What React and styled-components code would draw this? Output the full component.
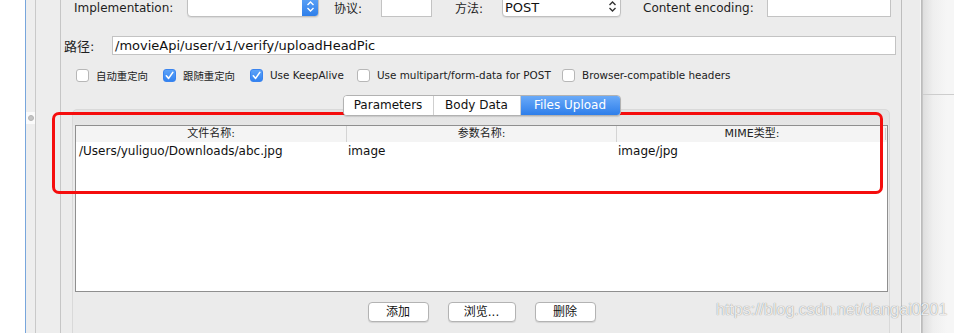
import React from "react";
import styled, { createGlobalStyle } from "styled-components";

const Global = createGlobalStyle`
  html, body { margin: 0; padding: 0; background: #fff; overflow: hidden; }
  #root { width: 954px; height: 333px; }
`;

const FONT = `"DejaVu Sans", "Noto Sans CJK SC", sans-serif`;

const Page = styled.div`
  position: relative;
  width: 954px;
  height: 333px;
  display: flex;
  font-family: ${FONT};
  color: #1d1d1d;
  overflow: hidden;
`;

const LeftGutter = styled.div`
  width: 25px;
  background: #ffffff;
`;

const Splitter = styled.div`
  width: 11px;
  box-sizing: border-box;
  border-left: 1px solid #78a6dc;
  border-right: 1px solid #c9c9c9;
  background: #eeeeee;
  display: flex;
  flex-direction: column;
  align-items: center;
  padding-top: 112px;
`;

const HandleBox = styled.div`
  width: 9px;
  height: 12px;
  background: #fbfbfb;
  display: flex;
  align-items: center;
  justify-content: center;
`;

const HandleDot = styled.div`
  width: 6px;
  height: 6px;
  border-radius: 50%;
  background: #c4c4c4;
  border: 1px solid #b4b4b4;
  box-sizing: border-box;
`;

const SideStrip = styled.div`
  width: ${(p) => p.$w}px;
  box-sizing: border-box;
  background: #ededed;
  border-right: 1px solid ${(p) => p.$line};
`;

const Main = styled.div`
  width: 841px;
  box-sizing: border-box;
  background: #ececec;
  border-right: 1px solid #bdbdbd;
  display: flex;
  flex-direction: column;
`;

const Row = styled.div`
  display: flex;
  align-items: center;
  height: ${(p) => p.$h}px;
  margin-top: ${(p) => p.$mt}px;
  padding-left: ${(p) => p.$pl}px;
`;

const Label = styled.span`
  width: ${(p) => p.$w}px;
  margin-left: ${(p) => p.$ml || 0}px;
  padding-top: ${(p) => p.$pt || 0}px;
  flex-shrink: 0;
  font-size: ${(p) => p.$fs || 12}px;
  color: #1e1e1e;
  white-space: nowrap;
`;

const TextBox = styled.div`
  width: ${(p) => p.$w}px;
  height: ${(p) => p.$h}px;
  box-sizing: border-box;
  background: #fff;
  border: 1px solid #c3c3c3;
  font-size: 13px;
  line-height: ${(p) => p.$h - 2}px;
  padding-left: 2px;
  color: #111;
  white-space: nowrap;
  overflow: hidden;
`;

const SelectBox = styled.div`
  position: relative;
  width: ${(p) => p.$w}px;
  height: 21px;
  box-sizing: border-box;
  background: #fff;
  border: 1px solid #c0c0c0;
  border-radius: 4px;
  display: flex;
  align-items: center;
  font-size: 13px;
  padding-left: 2px;
  padding-top: 2px;
  color: #111;
  box-shadow: 0 1px 1px rgba(0, 0, 0, 0.08);
`;

const Stepper = styled.div`
  margin-left: auto;
  margin-top: -2px;
  width: 16px;
  height: 19px;
  border-radius: 0 3px 3px 0;
  background: ${(p) => (p.$blue ? "linear-gradient(#5ea4f7, #2f7fea)" : "transparent")};
  display: flex;
  align-items: center;
  justify-content: center;
`;

const CheckRow = styled.div`
  display: flex;
  align-items: center;
  width: ${(p) => p.$w}px;
  flex-shrink: 0;
`;

const Box = styled.div`
  width: 13px;
  height: 13px;
  flex-shrink: 0;
  box-sizing: border-box;
  border-radius: 3px;
  border: 1px solid ${(p) => (p.$on ? "#3a84ef" : "#b7b7b7")};
  background: ${(p) => (p.$on ? "linear-gradient(#5da3f8, #3282f0)" : "#fff")};
  display: flex;
  align-items: center;
  justify-content: center;
  margin-right: 7px;
`;

const CheckText = styled.span`
  font-size: 10.4px;
  color: #222;
  white-space: nowrap;
`;

const TabArea = styled.div`
  margin-top: 13px;
  margin-left: 11px;
  width: 818px;
  display: flex;
  flex-direction: column;
  align-items: center;
`;

const TabBar = styled.div`
  position: relative;
  z-index: 1;
  display: flex;
  height: 19px;
  margin-bottom: -7px;
  margin-left: 1px;
  border: 1px solid #b2b2b2;
  border-radius: 4px;
  background: #fff;
  box-shadow: 0 1px 1px rgba(0, 0, 0, 0.12);
  overflow: hidden;
`;

const Tab = styled.div`
  width: ${(p) => p.$w}px;
  font-size: 12px;
  line-height: 19px;
  text-align: center;
  color: ${(p) => (p.$active ? "#fff" : "#111")};
  background: ${(p) => (p.$active ? "linear-gradient(#6aaaf8, #2e7eea)" : "#fff")};
  border-left: ${(p) => (p.$first ? "none" : "1px solid #cfcfcf")};
`;

const Panel = styled.div`
  width: 818px;
  height: 232px;
  box-sizing: border-box;
  border: 1px solid #d9d9d9;
  border-radius: 5px 5px 0 0;
  background: linear-gradient(#e3e3e3 0px, #e6e6e6 16px, #ebebeb 16px);
  padding: 15px 1px 0 2px;
  display: flex;
  flex-direction: column;
`;

const Table = styled.div`
  height: 167px;
  box-sizing: border-box;
  border: 1px solid #8f8f8f;
  background: #fff;
  display: flex;
  flex-direction: column;
`;

const Cols = styled.div`
  position: relative;
  display: grid;
  grid-template-columns: 270px 270px 1fr;
  height: ${(p) => p.$h}px;
  background: ${(p) => p.$bg};
`;

const HeadCell = styled.div`
  font-size: 11px;
  line-height: 16px;
  text-align: center;
  color: #222;
  border-left: ${(p) => (p.$first ? "none" : "1px solid #d4d4d4")};
`;

const Cell = styled.div`
  font-size: 12px;
  line-height: 18px;
  padding-left: ${(p) => p.$pl}px;
  color: #111;
  white-space: nowrap;
`;

const ScrollMark = styled.div`
  position: absolute;
  right: 1px;
  top: 2px;
  width: 1px;
  height: 12px;
  background: #cfcfcf;
`;

const Buttons = styled.div`
  display: flex;
  justify-content: center;
  gap: 19px;
  margin-top: 10px;
`;

const Button = styled.div`
  width: ${(p) => p.$w}px;
  height: 20px;
  box-sizing: border-box;
  border: 1px solid #b3b3b3;
  border-radius: 4px;
  background: #fff;
  box-shadow: 0 1px 1px rgba(0, 0, 0, 0.1);
  font-size: 12px;
  line-height: 18px;
  text-align: center;
  color: #111;
`;

const RightStrip = styled.div`
  width: 20px;
  box-sizing: border-box;
  background: #ececec;
  border-right: 1px solid #bcbcbc;
  box-shadow: inset -1px 0 0 #f6f6f6;
`;

const RightArea = styled.div`
  flex: 1;
  display: flex;
  flex-direction: column;
  border-left: 1px solid #c6c6c6;
  background: linear-gradient(to right, #dedede, #efefef 10px, #f6f6f6 24px);
`;

const RightTop = styled.div`
  height: 94px;
  border-bottom: 1px solid #cdcdcd;
`;

const Annotation = styled.div`
  position: absolute;
  left: 52px;
  top: 112px;
  width: 831px;
  height: 82px;
  box-sizing: border-box;
  border: 3px solid #f50d0d;
  border-radius: 7px;
  pointer-events: none;
`;

const Watermark = styled.div`
  position: absolute;
  left: 716px;
  top: 300px;
  font-family: "Liberation Sans", Arial, sans-serif;
  font-size: 16px;
  line-height: 20px;
  color: rgba(255, 255, 255, 0.85);
  text-shadow: 0 0 1px rgba(0, 0, 0, 0.35), 0 0 1px rgba(0, 0, 0, 0.2);
  white-space: nowrap;
`;

const Chevrons = ({ color }) => (
  <svg width="9" height="13" viewBox="0 0 9 13">
    <path d="M1.5 5 L4.5 2 L7.5 5" fill="none" stroke={color} strokeWidth="1.4" />
    <path d="M1.5 8 L4.5 11 L7.5 8" fill="none" stroke={color} strokeWidth="1.4" />
  </svg>
);

const Check = () => (
  <svg width="11" height="11" viewBox="0 0 11 11">
    <path d="M2.3 5.8 L4.6 8.4 L8.8 2.4" fill="none" stroke="#fff" strokeWidth="1.6" strokeLinecap="round" strokeLinejoin="round" />
  </svg>
);

const Checkbox = ({ on, label, w }) => (
  <CheckRow $w={w}>
    <Box $on={on}>{on && <Check />}</Box>
    <CheckText>{label}</CheckText>
  </CheckRow>
);

export default function App() {
  return (
    <>
      <Global />
      <Page>
        <LeftGutter />
        <Splitter>
          <HandleBox>
            <HandleDot />
          </HandleBox>
        </Splitter>
        <SideStrip $w={25} $line="#c6c6c6" />
        <Main>
          <Row $h={21} $mt={-4} $pl={13}>
            <Label $w={113} $pt={2}>Implementation:</Label>
            <SelectBox $w={132}>
              <Stepper $blue>
                <Chevrons color="#fff" />
              </Stepper>
            </SelectBox>
            <Label $w={47} $ml={15} $pt={2}>协议:</Label>
            <TextBox $w={51} $h={21} />
            <Label $w={47} $ml={23} $pt={2}>方法:</Label>
            <SelectBox $w={119}>
              POST
              <Stepper>
                <Chevrons color="#333" />
              </Stepper>
            </SelectBox>
            <Label $w={124} $ml={22} $pt={2}>Content encoding:</Label>
            <TextBox $w={124} $h={21} />
          </Row>
          <Row $h={19} $mt={19} $pl={3}>
            <Label $w={48} $fs={13}>路径:</Label>
            <TextBox $w={784} $h={19}>/movieApi/user/v1/verify/uploadHeadPic</TextBox>
          </Row>
          <Row $h={14} $mt={13} $pl={15}>
            <Checkbox on={false} label="自动重定向" w={87} />
            <Checkbox on label="跟随重定向" w={87} />
            <Checkbox on label="Use KeepAlive" w={107} />
            <Checkbox on={false} label="Use multipart/form-data for POST" w={205} />
            <Checkbox on={false} label="Browser-compatible headers" w={200} />
          </Row>
          <TabArea>
            <TabBar>
              <Tab $w={89} $first>Parameters</Tab>
              <Tab $w={86}>Body Data</Tab>
              <Tab $w={99} $active>Files Upload</Tab>
            </TabBar>
            <Panel>
              <Table>
                <Cols $h={16} $bg="#f4f4f4">
                  <HeadCell $first>文件名称:</HeadCell>
                  <HeadCell>参数名称:</HeadCell>
                  <HeadCell>MIME类型:</HeadCell>
                  <ScrollMark />
                </Cols>
                <Cols $h={18} $bg="#fff">
                  <Cell $pl={3}>/Users/yuliguo/Downloads/abc.jpg</Cell>
                  <Cell $pl={2}>image</Cell>
                  <Cell $pl={2}>image/jpg</Cell>
                </Cols>
              </Table>
              <Buttons>
                <Button $w={61}>添加</Button>
                <Button $w={68}>浏览...</Button>
                <Button $w={61}>删除</Button>
              </Buttons>
            </Panel>
          </TabArea>
        </Main>
        <RightStrip />
        <RightArea>
          <RightTop />
        </RightArea>
        <Annotation />
        <Watermark>https://blog.csdn.net/dangai0201</Watermark>
      </Page>
    </>
  );
}
